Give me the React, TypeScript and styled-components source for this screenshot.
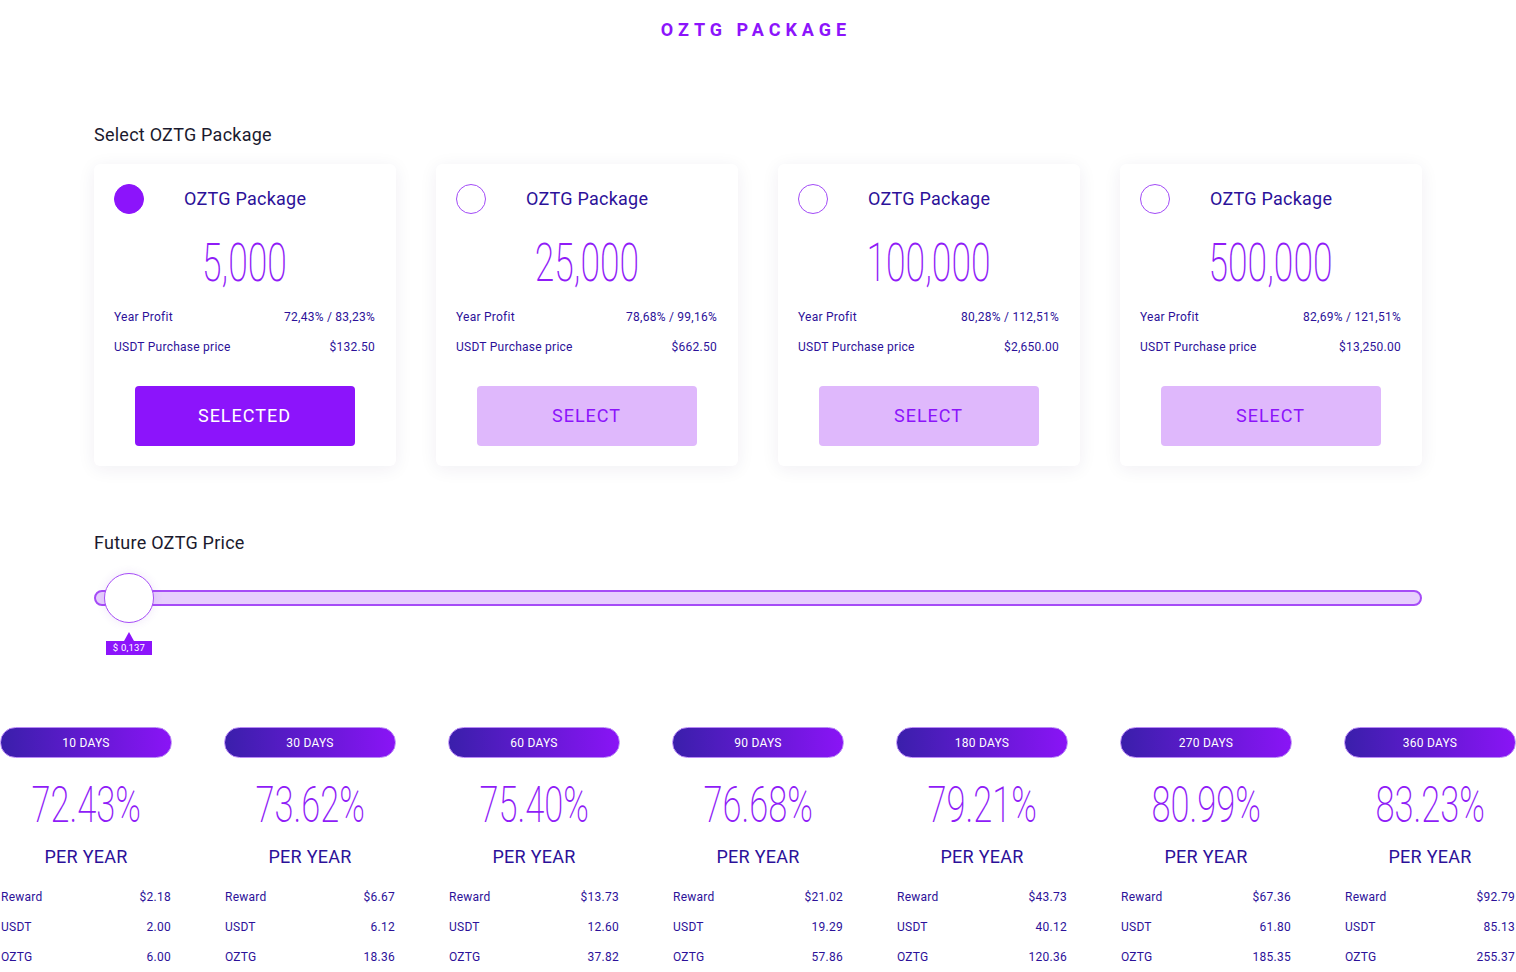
import React from "react";
import styled, { createGlobalStyle } from "styled-components";

const GlobalStyle = createGlobalStyle`
  html, body { margin: 0; padding: 0; background: #ffffff; }
  body {
    font-family: Roboto, "Noto Sans", "Liberation Sans", sans-serif;
    color: #1b1a2e;
    letter-spacing: 0.25px;
  }
  * { box-sizing: border-box; }
`;

const PURPLE = "#8c14fb";
const INDIGO = "#2c1199";

const Page = styled.div`
  width: 1516px;
  min-height: 972px;
  overflow: hidden;
`;

const Header = styled.header`
  height: 60px;
  display: flex;
  align-items: center;
  justify-content: center;
`;

const Title = styled.h1`
  margin: 0 4px 0 0;
  font-size: 18px;
  font-weight: 700;
  letter-spacing: 5px;
  color: ${PURPLE};
  line-height: 60px;
`;

const Container = styled.main`
  width: 1328px;
  margin: 0 auto;
  padding-top: 60px;
`;

const SectionLabel = styled.h2<{ $top?: number }>`
  margin: ${(p) => p.$top ?? 0}px 0 0 0;
  font-size: 18px;
  font-weight: 400;
  line-height: 30px;
  color: #1b1a2e;
`;

const CardRow = styled.div`
  margin-top: 14px;
  display: grid;
  grid-template-columns: repeat(4, 302px);
  gap: 40px;
`;

const Card = styled.div`
  height: 302px;
  background: #fff;
  border-radius: 6px;
  box-shadow: 0 3px 18px rgba(40, 30, 90, 0.07);
  padding: 20px 21px 20px 20px;
  display: flex;
  flex-direction: column;
`;

const CardHead = styled.div`
  display: flex;
  align-items: center;
  gap: 40px;
  height: 30px;
`;

const Radio = styled.span<{ $on: boolean }>`
  width: 30px;
  height: 30px;
  border-radius: 50%;
  flex: none;
  background: ${(p) => (p.$on ? PURPLE : "#fff")};
  border: 1.5px solid ${(p) => (p.$on ? PURPLE : "#a24bf7")};
`;

const CardTitle = styled.span`
  font-size: 18px;
  color: ${INDIGO};
  line-height: 30px;
`;

const BigNumberLine = styled.div<{ $h: number; $top: number }>`
  margin-top: ${(p) => p.$top}px;
  height: ${(p) => p.$h}px;
  display: flex;
  align-items: center;
  justify-content: center;
`;

const Thin = styled.span<{ $size: number; $scale: number }>`
  display: inline-block;
  font-family: Roboto, "Noto Sans", sans-serif;
  font-weight: 200;
  letter-spacing: 0;
  font-size: ${(p) => p.$size}px;
  line-height: 1;
  color: #8f1cf7;
  transform: scaleX(${(p) => p.$scale});
  white-space: nowrap;
`;

const InfoRow = styled.div<{ $top?: number }>`
  margin-top: ${(p) => p.$top ?? 0}px;
  height: 30px;
  display: flex;
  align-items: center;
  justify-content: space-between;
  font-size: 12px;
  color: ${INDIGO};
`;

const SelectButton = styled.button<{ $on: boolean }>`
  margin: 24px auto 0;
  width: 220px;
  height: 60px;
  padding: 0 0 2px;
  border: none;
  border-radius: 4px;
  font-family: Roboto, "Noto Sans", sans-serif;
  font-size: 18px;
  letter-spacing: 1px;
  background: ${(p) => (p.$on ? PURPLE : "#dfb8fc")};
  color: ${(p) => (p.$on ? "#ffffff" : PURPLE)};
  cursor: pointer;
`;

const SliderWrap = styled.div`
  margin-top: 15px;
  position: relative;
  height: 50px;
  display: flex;
  align-items: center;
`;

const Track = styled.div`
  width: 100%;
  height: 16px;
  border-radius: 8px;
  background: #e7cffd;
  border: 2px solid #a64cf7;
`;

const Thumb = styled.div`
  position: absolute;
  left: 10px;
  top: 0;
  width: 50px;
  height: 50px;
  border-radius: 50%;
  background: #fff;
  border: 1.5px solid #a64cf7;
  box-shadow: 0 0 10px rgba(120, 60, 200, 0.12);
`;

const Tip = styled.div`
  position: absolute;
  left: 12px;
  top: 59px;
  width: 46px;
  display: flex;
  flex-direction: column;
  align-items: center;
`;

const TipArrow = styled.span`
  width: 0;
  height: 0;
  border-left: 5px solid transparent;
  border-right: 5px solid transparent;
  border-bottom: 9px solid ${PURPLE};
`;

const TipBox = styled.span`
  width: 46px;
  height: 14px;
  background: ${PURPLE};
  color: #fff;
  font-size: 9.5px;
  letter-spacing: 0.2px;
  line-height: 14px;
  text-align: center;
`;

const PlanGrid = styled.section`
  margin-top: 104px;
  display: grid;
  grid-template-columns: repeat(7, 172px);
  gap: 52px;
`;

const Plan = styled.div`
  display: flex;
  flex-direction: column;
`;

const Pill = styled.div`
  height: 31px;
  border-radius: 16px;
  background: linear-gradient(90deg, #3a1fab 0%, #8a14f6 100%);
  border: 1px solid #b98af6;
  color: #fff;
  font-size: 12px;
  display: flex;
  align-items: center;
  justify-content: center;
`;

const PerYear = styled.div`
  margin-top: 7px;
  height: 30px;
  line-height: 30px;
  text-align: center;
  font-size: 18px;
  color: ${INDIGO};
`;

const PlanRow = styled.div<{ $top?: number }>`
  margin-top: ${(p) => p.$top ?? 0}px;
  height: 30px;
  padding: 0 1px;
  display: flex;
  align-items: center;
  justify-content: space-between;
  font-size: 12px;
  color: ${INDIGO};
`;

const packages = [
  { amount: "5,000", profit: "72,43% / 83,23%", price: "$132.50", on: true },
  { amount: "25,000", profit: "78,68% / 99,16%", price: "$662.50", on: false },
  { amount: "100,000", profit: "80,28% / 112,51%", price: "$2,650.00", on: false },
  { amount: "500,000", profit: "82,69% / 121,51%", price: "$13,250.00", on: false },
];

const plans = [
  { days: "10 DAYS", pct: "72.43%", reward: "$2.18", usdt: "2.00", oztg: "6.00" },
  { days: "30 DAYS", pct: "73.62%", reward: "$6.67", usdt: "6.12", oztg: "18.36" },
  { days: "60 DAYS", pct: "75.40%", reward: "$13.73", usdt: "12.60", oztg: "37.82" },
  { days: "90 DAYS", pct: "76.68%", reward: "$21.02", usdt: "19.29", oztg: "57.86" },
  { days: "180 DAYS", pct: "79.21%", reward: "$43.73", usdt: "40.12", oztg: "120.36" },
  { days: "270 DAYS", pct: "80.99%", reward: "$67.36", usdt: "61.80", oztg: "185.35" },
  { days: "360 DAYS", pct: "83.23%", reward: "$92.79", usdt: "85.13", oztg: "255.37" },
];

export default function App() {
  return (
    <Page>
      <GlobalStyle />
      <Header>
        <Title>OZTG PACKAGE</Title>
      </Header>
      <Container>
        <SectionLabel>Select OZTG Package</SectionLabel>
        <CardRow>
          {packages.map((p) => (
            <Card key={p.amount}>
              <CardHead>
                <Radio $on={p.on} />
                <CardTitle>OZTG Package</CardTitle>
              </CardHead>
              <BigNumberLine $h={60} $top={19}>
                <Thin $size={53} $scale={0.67}>{p.amount}</Thin>
              </BigNumberLine>
              <InfoRow $top={9}>
                <span>Year Profit</span>
                <span>{p.profit}</span>
              </InfoRow>
              <InfoRow>
                <span>USDT Purchase price</span>
                <span>{p.price}</span>
              </InfoRow>
              <SelectButton $on={p.on}>{p.on ? "SELECTED" : "SELECT"}</SelectButton>
            </Card>
          ))}
        </CardRow>
        <SectionLabel $top={62}>Future OZTG Price</SectionLabel>
        <SliderWrap>
          <Track />
          <Thumb />
          <Tip>
            <TipArrow />
            <TipBox>$ 0,137</TipBox>
          </Tip>
        </SliderWrap>
      </Container>
      <PlanGrid>
        {plans.map((p) => (
          <Plan key={p.days}>
            <Pill>{p.days}</Pill>
            <BigNumberLine $h={60} $top={17}>
              <Thin $size={50} $scale={0.69}>{p.pct}</Thin>
            </BigNumberLine>
            <PerYear>PER YEAR</PerYear>
            <PlanRow $top={10}>
              <span>Reward</span>
              <span>{p.reward}</span>
            </PlanRow>
            <PlanRow>
              <span>USDT</span>
              <span>{p.usdt}</span>
            </PlanRow>
            <PlanRow>
              <span>OZTG</span>
              <span>{p.oztg}</span>
            </PlanRow>
          </Plan>
        ))}
      </PlanGrid>
    </Page>
  );
}
